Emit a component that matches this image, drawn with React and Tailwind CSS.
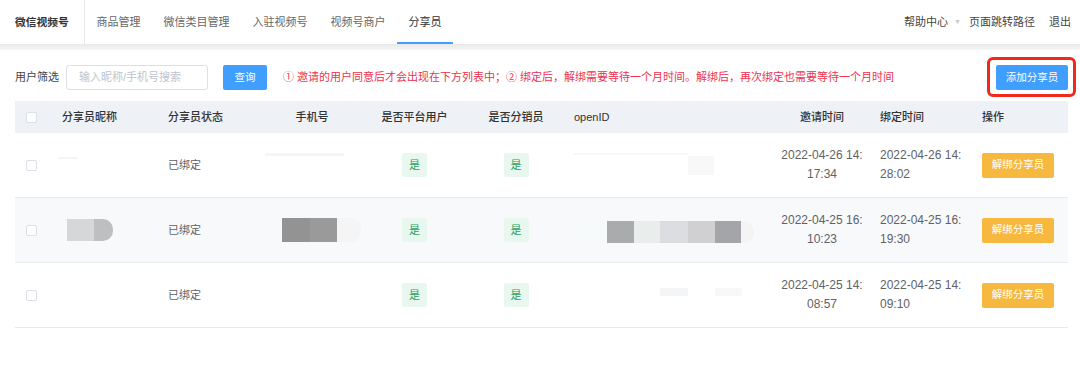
import React from 'react';

const navItems = ['商品管理', '微信类目管理', '入驻视频号', '视频号商户', '分享员'];

const cols = 'grid grid-cols-[47px_106px_102px_84px_121px_82px_218px_94px_108px_91px]';

const rows = [
  { invite: ['2022-04-26 14:', '17:34'], bind: ['2022-04-26 14:', '28:02'], striped: false, masked: 'faint' },
  { invite: ['2022-04-25 16:', '10:23'], bind: ['2022-04-25 16:', '19:30'], striped: true, masked: 'full' },
  { invite: ['2022-04-25 14:', '08:57'], bind: ['2022-04-25 14:', '09:10'], striped: false, masked: 'light' },
];

const Checkbox = () => (
  <div className="w-[11px] h-[11px] border border-[#dcdfe6] rounded-[2px] bg-white" />
);

const Tag = () => (
  <div className="w-[25px] h-[24px] rounded-[2px] bg-[#e8f8ee] text-[#2e9e63] text-[11px] flex items-center justify-center">是</div>
);

const NickMask = ({ type }) => {
  if (type === 'full') {
    return (
      <div className="flex h-[22px] ml-[5px]">
        <div className="w-[27px] bg-[#d6d7d8]" />
        <div className="w-[19px] bg-[#bebfc1] rounded-r-[10px]" />
      </div>
    );
  }
  if (type === 'faint') return <div className="w-[19px] h-[2px] bg-[#f4f4f4] -mt-[15px] -ml-[4px]" />;
  return null;
};

const PhoneMask = ({ type }) => {
  if (type === 'full') {
    return (
      <div className="flex h-[24px] ml-[12px]">
        <div className="w-[28px] bg-[#939393]" />
        <div className="w-[27px] bg-[#9a9a9a]" />
        <div className="w-[24px] bg-[#f5f5f5] rounded-r-[10px]" />
      </div>
    );
  }
  if (type === 'faint') return <div className="w-[79px] h-[3px] bg-[#f6f6f6] -mt-[21px] -ml-[5px]" />;
  return null;
};

const OpenIdMask = ({ type }) => {
  if (type === 'full') {
    return (
      <div className="flex h-[22px] ml-[23px] mt-[3px]">
        <div className="w-[27px] bg-[#f6fafa]" />
        <div className="w-[27px] bg-[#a9abad]" />
        <div className="w-[26px] bg-[#e9edec]" />
        <div className="w-[28px] bg-[#dcdde0]" />
        <div className="w-[27px] bg-[#d0d0d3]" />
        <div className="w-[26px] bg-[#a4a5a8]" />
        <div className="w-[13px] bg-[#f4f4f5] rounded-r-[10px]" />
      </div>
    );
  }
  if (type === 'faint') {
    return (
      <div className="flex items-start ml-[17px] h-[20px]">
        <div className="w-[114px] h-[2px] bg-[#f7f7f7] mt-[-2px]" />
        <div className="w-[26px] h-[19px] bg-[#f8f8f8] mt-[1px]" />
      </div>
    );
  }
  return (
    <div className="flex ml-[103px] -mt-[7px] gap-[27px]">
      <div className="w-[28px] h-[8px] bg-[#f4f5f6]" />
      <div className="w-[27px] h-[8px] bg-[#f8f8f9]" />
    </div>
  );
};

export default function App() {
  return (
    <div className="relative w-[1080px] h-[378px] overflow-hidden bg-white font-['Liberation_Sans','Noto_Sans_CJK_SC',sans-serif] text-[11px] text-[#606266]">
      {/* top bar */}
      <div className="h-[44px] flex items-stretch pl-[15px] pr-[9px] bg-white">
        <div className="w-[70px] border-r border-[#e8e8e8] flex items-center text-[10.75px] font-bold text-[#333]">微信视频号</div>
        <div className="flex items-stretch">
          {navItems.map((item) => (
            <div
              key={item}
              className={`relative px-[11.5px] flex items-center text-[11px] ${item === '分享员' ? 'text-[#333]' : 'text-[#666]'}`}
            >
              {item}
              {item === '分享员' && <div className="absolute left-0 right-0 bottom-0 h-[2px] bg-[#409eff]" />}
            </div>
          ))}
        </div>
        <div className="ml-auto flex items-center text-[11px] text-[#444]">
          <span>帮助中心</span>
          <span className="ml-[6px] text-[7px] text-[#c8c8c8]">▼</span>
          <span className="ml-[8px]">页面跳转路径</span>
          <span className="ml-[14px]">退出</span>
        </div>
      </div>
      <div className="h-[6px] bg-gradient-to-b from-[#e9e9e9] to-[#f5f5f5]" />

      <div className="w-[1053px] ml-[15px]">
        {/* filter row */}
        <div className="mt-[15px] h-[25px] flex items-center">
          <div className="w-[51px] text-[#444]">用户筛选</div>
          <div className="w-[142px] h-[25px] border border-[#dcdfe6] rounded-[3px] flex items-center pl-[12px] text-[#c0c4cc]">
            输入昵称/手机号搜索
          </div>
          <button className="ml-[15px] w-[44px] h-[25px] rounded-[2px] bg-[#409eff] text-white text-[10.5px]">查询</button>
          <div className="ml-[16px] text-[#ec3350]">
            ① 邀请的用户同意后才会出现在下方列表中；② 绑定后，解绑需要等待一个月时间。解绑后，再次绑定也需要等待一个月时间
          </div>
          <button className="ml-auto w-[72px] h-[25px] rounded-[2px] bg-[#409eff] text-white text-[10.5px]">添加分享员</button>
        </div>

        {/* table */}
        <div className="mt-[11px]">
          <div className={`${cols} h-[32px] bg-[#eef1f6] text-[#333] font-medium items-center`}>
            <div className="pl-[11px]"><Checkbox /></div>
            <div>分享员昵称</div>
            <div>分享员状态</div>
            <div className="text-center">手机号</div>
            <div className="text-center">是否平台用户</div>
            <div className="text-center">是否分销员</div>
            <div className="pl-[17px]">openID</div>
            <div className="text-center">邀请时间</div>
            <div className="pl-[11px]">绑定时间</div>
            <div className="pl-[5px]">操作</div>
          </div>
          {rows.map((r, i) => (
            <div
              key={i}
              className={`${cols} h-[65px] items-center border-b border-[#e6e9ee] ${r.striped ? 'bg-[#f8f9fb]' : 'bg-white'}`}
            >
              <div className="pl-[11px]"><Checkbox /></div>
              <div className="flex items-center"><NickMask type={r.masked} /></div>
              <div>已绑定</div>
              <div className="flex items-center"><PhoneMask type={r.masked} /></div>
              <div className="flex justify-center"><Tag /></div>
              <div className="flex justify-center"><Tag /></div>
              <div className="flex items-center"><OpenIdMask type={r.masked} /></div>
              <div className="flex justify-center">
                <div className="w-[86px] text-center text-[12px] leading-[19px] break-all">
                  {r.invite[0]}{r.invite[1]}
                </div>
              </div>
              <div className="pl-[11px]">
                <div className="w-[86px] text-[12px] leading-[19px] break-all">
                  {r.bind[0]}{r.bind[1]}
                </div>
              </div>
              <div className="pl-[5px]">
                <button className="w-[72px] h-[25px] rounded-[2px] bg-[#f6b83f] text-white text-[10.5px]">解绑分享员</button>
              </div>
            </div>
          ))}
        </div>
      </div>

      {/* annotation around the add button */}
      <div className="absolute left-[987px] top-[57px] w-[89px] h-[40px] border-[3px] border-[#f0281e] rounded-[6px]" />
    </div>
  );
}
